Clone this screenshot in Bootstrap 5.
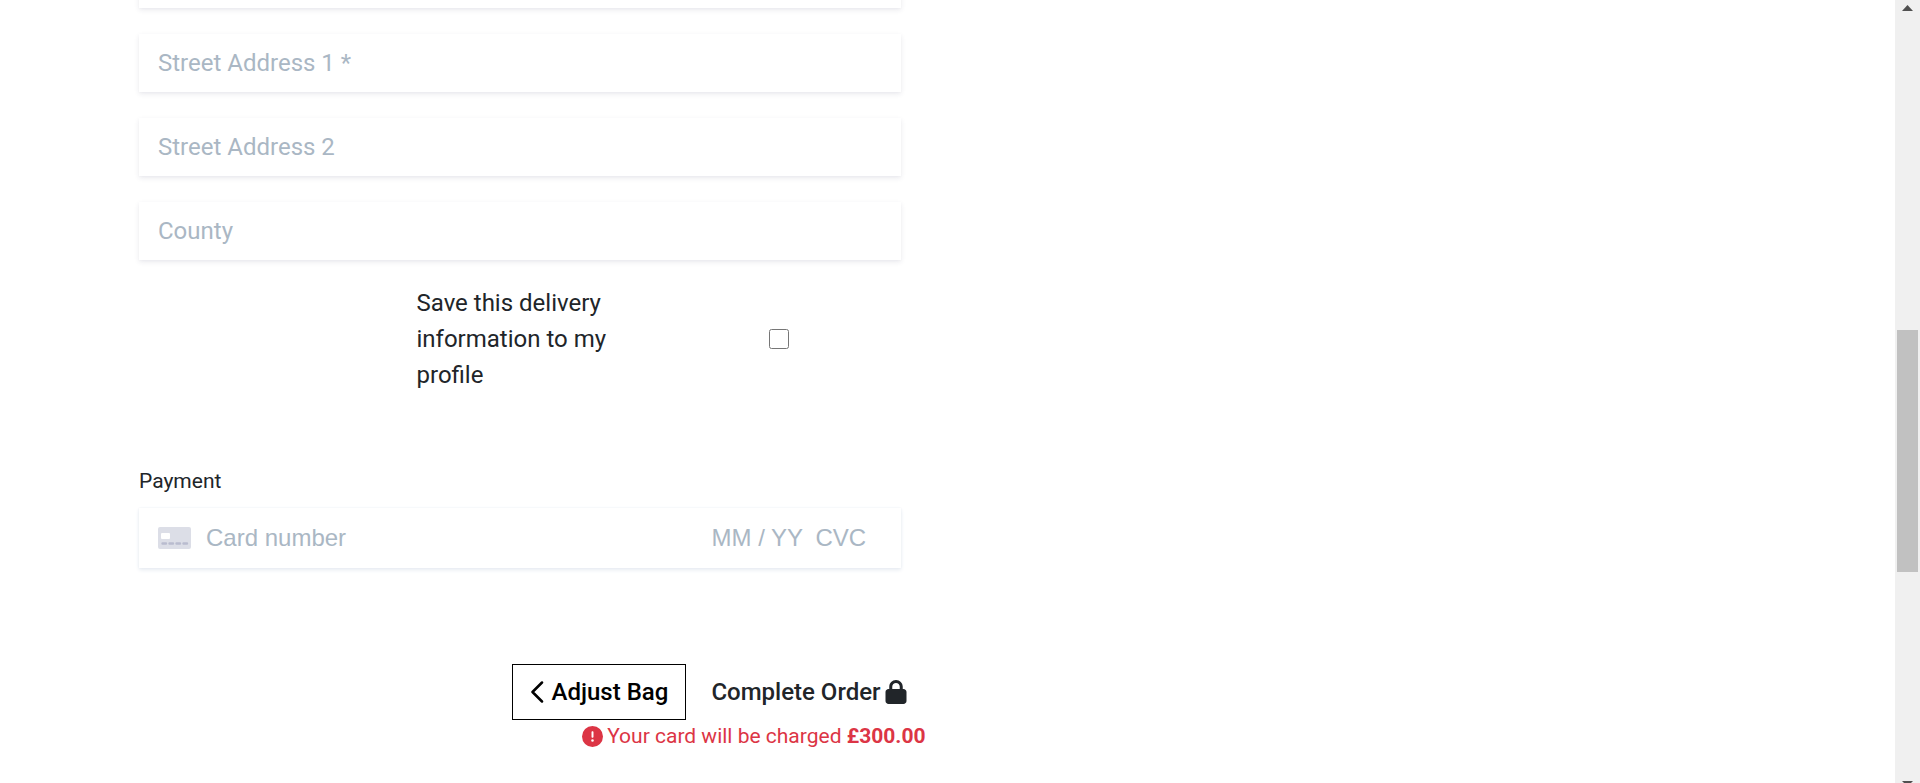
<!DOCTYPE html>
<html lang="en">
<head>
<meta charset="utf-8">
<meta name="viewport" content="width=device-width, initial-scale=1">
<title>Checkout</title>
<link href="https://cdn.jsdelivr.net/npm/bootstrap@5.3.0/dist/css/bootstrap.min.css" rel="stylesheet">
<style>
  body { font-family: Roboto, "Liberation Sans", sans-serif; font-size: 24px; line-height: 36px; color: #212529; background: #fff; }
  .checkout { padding: 0 22px 0 139px; margin-top: -50px; }
  .fields { margin-right: 25px; }
  .field { height: 58px; padding: 0 19px; border: 0; border-radius: 0; font-size: 24px; margin-bottom: 26px; box-shadow: 0 2px 5px rgba(50, 50, 93, .1), 0 1px 2px rgba(50, 50, 93, .02); }
  .field::placeholder, .card-field input::placeholder { color: #aab7c4; opacity: 1; }
  .save-row { gap: 146px; padding-right: 112px; margin-top: -1px; }
  .save-row label { width: 206px; }
  .save-row input { width: 20px; height: 20px; }
  .pay-title { font-size: 21px; line-height: 32px; margin: 72px 0 11px; }
  .card-field { height: 60px; padding: 0 33px 0 19px; box-shadow: 0 2px 4px #e6ebf1, 0 0 2px #eff2f6; }
  .card-field input { border: 0; padding: 0; background: transparent; font: 24px "Liberation Sans", sans-serif; min-width: 0; }
  .card-icon { width: 33px; height: 22px; margin-right: 15px; }
  .date-in { width: 92px; margin-right: 12px; }
  .cvc-in { width: 52px; }
  .actions { margin-top: 96px; padding-right: 18px; gap: 8px; }
  .btn-shop { height: 56px; padding: 0 17px; border-radius: 0; font-size: 24px; line-height: 36px; font-weight: 500; }
  .btn-back, .btn-back:hover { border: 1px solid #000; color: #000; background: #fff; }
  .btn-done { color: #212529; border-color: transparent; padding: 0; margin-left: 16px; }
  .charge { font-size: 21px; line-height: 32px; gap: 4px; }
  .scroll-track { width: 25px; background: #f0f0f0; padding: 5px 2px 0; }
  .scroll-thumb { height: 242px; background: #c1c1c1; }
</style>
</head>
<body>
<div class="d-flex vh-100 overflow-hidden">
  <main class="flex-grow-1">
    <div class="row g-0">
      <div class="col-12 col-lg-6">
        <form class="checkout">
          <div class="fields">
            <input class="form-control field" type="text" aria-label="Town or City">
            <input class="form-control field" type="text" placeholder="Street Address 1 *" aria-label="Street Address 1">
            <input class="form-control field" type="text" placeholder="Street Address 2" aria-label="Street Address 2">
            <input class="form-control field" type="text" placeholder="County" aria-label="County">
            <div class="save-row d-flex justify-content-end align-items-center">
              <label for="save-info">Save this delivery information to my profile</label>
              <input type="checkbox" id="save-info">
            </div>
            <h2 class="pay-title fw-normal">Payment</h2>
            <div class="card-field d-flex align-items-center">
              <svg class="card-icon flex-shrink-0" viewBox="0 0 33 22" aria-hidden="true">
                <rect width="33" height="22" rx="2" fill="#dcdee7"/>
                <rect x="3" y="6" width="9" height="6" rx="1" fill="#fff"/>
                <path d="M4.500 16.500h3.500M11.500 16.500h3.500M18.500 16.500h3.500M25.500 16.500h3.500" stroke="#b9bccf" stroke-width="2.400" stroke-linecap="round"/>
              </svg>
              <input class="flex-grow-1" type="text" placeholder="Card number" aria-label="Card number">
              <input class="date-in" type="text" placeholder="MM / YY" aria-label="Expiry date">
              <input class="cvc-in" type="text" placeholder="CVC" aria-label="CVC">
            </div>
          </div>
          <div class="actions d-flex justify-content-end">
            <button type="button" class="btn btn-shop btn-back d-flex align-items-center">
              <svg class="me-2" width="14" height="22" viewBox="0 0 14 22" fill="none" stroke="currentColor" stroke-width="2.500" stroke-linecap="round" stroke-linejoin="round" aria-hidden="true"><path d="M12 1.500 2.500 11 12 20.500"/></svg>Adjust Bag
            </button>
            <button type="submit" class="btn btn-shop btn-done d-flex align-items-center">
              Complete Order
              <svg class="ms-1" width="22" height="24" viewBox="0 0 448 512" fill="currentColor" aria-hidden="true"><path d="M144 144v48H304V144c0-44.200-35.800-80-80-80s-80 35.800-80 80zM80 192V144C80 64.500 144.500 0 224 0s144 64.500 144 144v48h16c35.300 0 64 28.700 64 64V448c0 35.300-28.700 64-64 64H64c-35.300 0-64-28.700-64-64V256c0-35.300 28.700-64 64-64H80z"/></svg>
            </button>
          </div>
          <p class="charge text-danger d-flex justify-content-end align-items-center mb-0">
            <svg width="21" height="21" viewBox="0 0 512 512" fill="currentColor" aria-hidden="true"><path d="M256 512A256 256 0 1 0 256 0a256 256 0 1 0 0 512zm0-384c13.300 0 24 10.700 24 24V264c0 13.300-10.700 24-24 24s-24-10.700-24-24V152c0-13.300 10.700-24 24-24zM224 352a32 32 0 1 1 64 0 32 32 0 1 1-64 0z"/></svg>
            <span>Your card will be charged <strong>£300.00</strong></span>
          </p>
        </form>
      </div>
    </div>
  </main>
  <div class="scroll-track d-flex flex-column flex-shrink-0" aria-hidden="true">
    <svg class="mx-auto flex-shrink-0" width="11" height="6" viewBox="0 0 11 6"><path d="M0 6 5.500 0 11 6z" fill="#505050"/></svg>
    <div style="flex: 319 0 0"></div>
    <div class="scroll-thumb flex-shrink-0"></div>
    <div style="flex: 209 0 0"></div>
    <svg class="mx-auto flex-shrink-0" width="11" height="2" viewBox="0 0 11 2"><path d="M0 0h11L9 2H2z" fill="#505050"/></svg>
  </div>
</div>
<script src="https://cdn.jsdelivr.net/npm/bootstrap@5.3.0/dist/js/bootstrap.bundle.min.js"></script>
</body>
</html>
